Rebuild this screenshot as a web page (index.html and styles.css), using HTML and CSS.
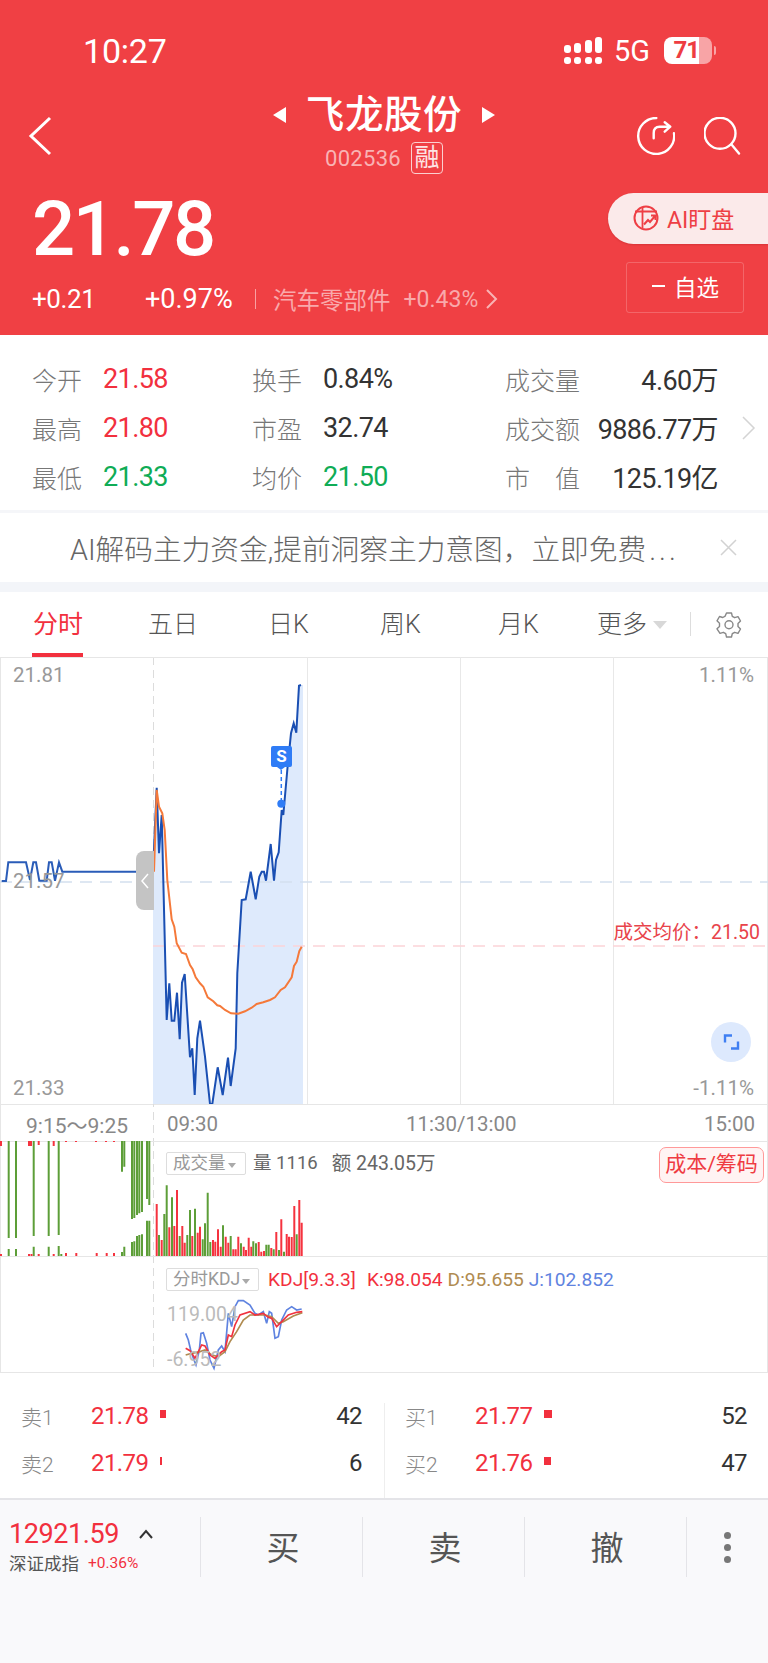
FILE: index.html
```html
<!DOCTYPE html>
<html lang="zh-CN">
<head>
  <meta charset="UTF-8">
  <meta name="viewport" content="width=device-width, initial-scale=1.0">
  <title>飞龙股份 002536</title>
  <link rel="stylesheet" href="styles.css">
</head>
<body>
<div class="page">

  <header class="header">
    <div class="status">
      <span class="time">10:27</span>
      <div class="status-right">
        <svg class="signal" width="39" height="27" viewBox="0 0 39 27">
          <g fill="#fff">
            <rect x="0" y="8" width="7" height="8" rx="3"/><rect x="0" y="20" width="7" height="7" rx="3"/>
            <rect x="10" y="6" width="7" height="10" rx="3"/><rect x="10" y="20" width="7" height="7" rx="3"/>
            <rect x="21" y="3" width="7" height="13" rx="3"/><rect x="21" y="20" width="7" height="7" rx="3"/>
            <rect x="31" y="0" width="7" height="16" rx="3"/><rect x="31" y="20" width="7" height="7" rx="3"/>
          </g>
        </svg>
        <span class="net">5G</span>
        <div class="battery"><span class="battery-level">71</span></div>
        <i class="battery-tip"></i>
      </div>
    </div>

    <div class="nav">
      <svg class="back" width="24" height="40" viewBox="0 0 24 40"><path d="M22 2 3 20l19 18" fill="none" stroke="#fff" stroke-width="3"/></svg>
      <div class="title-block">
        <div class="title-row">
          <i class="tri tri-left"></i>
          <h1 class="stock-name">飞龙股份</h1>
          <i class="tri tri-right"></i>
        </div>
        <div class="code-row"><span class="code">002536</span><span class="rong">融</span></div>
      </div>
      <div class="nav-icons">
        <svg width="38" height="38" viewBox="0 0 38 38" fill="none" stroke="#fff" stroke-width="2.400" stroke-linecap="round" stroke-linejoin="round">
          <path d="M19.300 1A18 18 0 1 0 37 16.300"/>
          <path d="M16.700 21.300V16c0-4 2-6.300 6-6.300h10M27.700 5.300l5.600 4.400-5.600 5"/>
        </svg>
        <svg width="38" height="38" viewBox="0 0 38 38" fill="none" stroke="#fff" stroke-width="2.400" stroke-linecap="round">
          <circle cx="16" cy="16.300" r="15.500"/><path d="m27.500 27.500 7.500 9"/>
        </svg>
      </div>
    </div>

    <div class="quote">
      <div class="quote-left">
        <div class="price">21.78</div>
        <div class="change-row">
          <span class="change">+0.21</span>
          <span class="change change-pct">+0.97%</span>
          <i class="change-sep"></i>
          <span class="sector">汽车零部件</span>
          <span class="sector-pct">+0.43%</span>
          <svg width="12" height="20" viewBox="0 0 12 20"><path d="m1 1 9 9-9 9" fill="none" stroke="#f9b3b4" stroke-width="2"/></svg>
        </div>
      </div>
      <div class="quote-right">
        <div class="ai-pill">
          <svg width="26" height="26" viewBox="0 0 26 26" fill="none" stroke="#ee3f45" stroke-width="2">
            <circle cx="13" cy="13" r="11.500"/>
            <path d="M2 6.500h22M9.500 2v21" stroke-width="1.800"/>
            <path d="m11 19.500 4-4.500 2 2 5-6M18 10.500h4.500V15" stroke-width="2"/>
          </svg>
          <span>AI盯盘</span>
        </div>
        <div class="watch-btn"><i class="watch-dash"></i><span>自选</span></div>
      </div>
    </div>
  </header>

  <section class="stats">
    <div class="stats-grid">
      <div class="stat stat-a"><span class="stat-label">今开</span><span class="up">21.58</span></div>
      <div class="stat stat-b"><span class="stat-label">换手</span><span class="flat">0.84%</span></div>
      <div class="stat stat-c"><span class="stat-label">成交量</span><span class="flat">4.60万</span></div>
      <div class="stat stat-a"><span class="stat-label">最高</span><span class="up">21.80</span></div>
      <div class="stat stat-b"><span class="stat-label">市盈</span><span class="flat">32.74</span></div>
      <div class="stat stat-c"><span class="stat-label">成交额</span><span class="flat">9886.77万</span></div>
      <div class="stat stat-a"><span class="stat-label">最低</span><span class="down">21.33</span></div>
      <div class="stat stat-b"><span class="stat-label">均价</span><span class="down">21.50</span></div>
      <div class="stat stat-c"><span class="stat-label">市　值</span><span class="flat">125.19亿</span></div>
    </div>
    <svg class="stats-more" width="14" height="24" viewBox="0 0 14 24"><path d="m1 1 11 11L1 23" fill="none" stroke="#d4d4d4" stroke-width="1.500"/></svg>
  </section>

  <div class="banner">
    <span class="banner-text">AI解码主力资金,提前洞察主力意图，立即免费<span class="banner-dots">...</span></span>
    <svg width="17" height="17" viewBox="0 0 17 17"><path d="m1 1 15 15M16 1 1 16" stroke="#d2d2d2" stroke-width="1.500"/></svg>
  </div>

  <nav class="tabs">
    <span class="tab tab-active">分时</span>
    <span class="tab">五日</span>
    <span class="tab">日K</span>
    <span class="tab">周K</span>
    <span class="tab">月K</span>
    <span class="tab">更多<i class="tab-caret"></i></span>
    <span class="tab tab-gear">
      <svg width="28" height="28" viewBox="0 0 28 28" fill="none" stroke="#888" stroke-width="1.400" stroke-linejoin="round">
        <path d="M11.500 2h5l.8 3.300 2.400 1.400 3.300-1 2.500 4.300-2.500 2.400v3.200l2.500 2.400-2.500 4.300-3.300-1-2.400 1.400-.8 3.300h-5l-.8-3.300-2.400-1.400-3.300 1L2 17.800l2.500-2.400v-3.200L2 9.800 4.500 5.500l3.300 1 2.400-1.400z"/>
        <circle cx="14" cy="13.800" r="4"/>
      </svg>
    </span>
  </nav>

  <section class="chart">
    <div class="panel panel-main">
      <svg class="panel-svg" width="768" height="447" viewBox="0 0 768 447" fill="none">
        <path fill="#deeafc" stroke="none" d="M153 214.700L156.700 130.700 159 196.300 161.700 158 163.300 223 166.700 363 169.300 326.300 171.700 363.700 174.300 363.700 177 335.700 179.700 382.300 182 325.700 184.700 317 190 400.300 192.300 391.300 194.700 438 197.300 381.300 200 363.700 205 399.700 210 447 212.300 447 217.700 410.300 222.700 438 228 400.700 230.700 429 235.700 391.300 237.300 316.300 241.700 243 245.700 242.300 250.700 214.700 255.700 242.300 259.300 219.700 261.700 214.700 264 214.700 266 223.700 270.700 187 274 223.700 276 203 278.700 195.300 281.700 153 283.300 158 287.300 113 291 76.300 293.700 66.300 296.300 75.700 299 28.700 301 28 303 28V447H153Z"/>
        <path stroke="#e8e8e8" d="M307.500 0V447M460.500 0V447M613.500 0V447"/>
        <path stroke="#d3dfee" stroke-width="1.500" stroke-dasharray="12 8" d="M0 225H768"/>
        <path stroke="#fbd3d7" stroke-width="1.500" stroke-dasharray="12 8" d="M153 289H768"/>
        <path stroke="#2a5cb8" stroke-width="2" d="M1.700 224H6L8.300 205.300H26L30 223 33.300 205.300H36L39.300 223.700H46.700L49 205.300H51.700L55 223.700 59 205.300 62.300 214.700H153"/>
        <path stroke="#1a4fb3" stroke-width="2" d="M153 214.700L156.700 130.700 159 196.300 161.700 158 163.300 223 166.700 363 169.300 326.300 171.700 363.700 174.300 363.700 177 335.700 179.700 382.300 182 325.700 184.700 317 190 400.300 192.300 391.300 194.700 438 197.300 381.300 200 363.700 205 399.700 210 447 212.300 447 217.700 410.300 222.700 438 228 400.700 230.700 429 235.700 391.300 237.300 316.300 241.700 243 245.700 242.300 250.700 214.700 255.700 242.300 259.300 219.700 261.700 214.700 264 214.700 266 223.700 270.700 187 274 223.700 276 203 278.700 195.300 281.700 153 283.300 158 287.300 113 291 76.300 293.700 66.300 296.300 75.700 299 28.700 301 28"/>
        <path stroke="#f5793a" stroke-width="2" d="M154 214.700L156.700 133 159 149.700 162.300 156.300 164.700 173 167.300 223 171.700 262.300 174.300 269.700 176.700 286.300 181.700 295.700 186 297 190 308 192.700 312.300 195.700 320.300 200 326.300 203.300 329.700 207.700 340.300 213.300 344.300 217.300 348.300 220 349 225 353 231 356.300 238.300 356.700 245 354.300 251.700 350.700 256.700 347 263.300 345.300 270 343 275 340.300 280.700 333 285 330.300 291.700 320.300 294 309 296.700 304.700 299.300 294 301.700 289.700"/>
        <path stroke="#2f7cf6" stroke-width="1.500" stroke-dasharray="4 3" d="M281.300 113V143"/>
        <circle cx="281.300" cy="146.700" r="4" fill="#2f7cf6"/>
        <circle cx="731" cy="385" r="20" fill="#dde9fd"/>
        <path stroke="#3f7ff2" stroke-width="2.400" d="M725 385.500V378.500H732M738 384.500V391.500H731"/>
      </svg>
      <span class="axis-label label-top-left">21.81</span>
      <span class="axis-label label-mid-left">21.57</span>
      <span class="axis-label label-bottom-left">21.33</span>
      <span class="axis-label label-top-right">1.11%</span>
      <span class="axis-label label-bottom-right">-1.11%</span>
      <span class="avg-label">成交均价：21.50</span>
      <div class="collapse-handle">
        <svg width="8" height="16" viewBox="0 0 8 16"><path d="M7 1 1 8l6 7" fill="none" stroke="#fff" stroke-width="1.500"/></svg>
      </div>
      <div class="sell-flag">S</div>
    </div>

    <div class="time-axis">
      <span class="time-pre">9:15～9:25</span>
      <span class="time-open">09:30</span>
      <span class="time-mid">11:30/13:00</span>
      <span class="time-close">15:00</span>
    </div>

    <div class="panel panel-volume">
      <svg class="panel-svg" width="768" height="115" viewBox="0 0 768 115" fill="none">
        <path stroke="#f5333f" stroke-width="2" d="M156.700 115V63M161.700 115V99M169.300 115V86.300M174.300 115V85M177 115V49M182.300 115V85M184.700 115V101.700M192.300 115V95M197.700 115V91.700M200 115V85.700M213 115V99M215.300 115V100.700M218 115V88.300M220.700 115V105.700M225.700 115V95.700M228.300 115V101.700M233.300 115V108.300M235.700 115V108.300M238.300 115V95.700M243.700 115V105.700M246 115V109M248.700 115V96.700M251.300 115V105.700M258.700 115V101M261.300 115V110.700M264 115V110M271.300 115V107M276.300 115V91M281.300 115V78.300M286.700 115V93M289 115V95.700M291.700 115V96M294.300 115V65M299.300 115V59M301.700 115V81.700"/>
        <path stroke="#5d9e38" stroke-width="2" d="M159 115V94M164.300 115V73M166.700 115V44.300M172 115V56.300M179.700 115V95M187.300 115V94M190 115V69M195 115V67.700M202.700 115V98.300M205 115V82.300M207.700 115V51.700M210.300 115V101M223 115V84.300M230.700 115V95M241 115V102.300M253.300 115V100.300M256 115V102.300M266.300 115V103.700M268.700 115V103.700M273.700 115V108.300M279 115V109M284 115V110.700M296.700 115V93.300"/>
        <path stroke="#5d9e38" stroke-width="2" d="M8.700 0V97M16 0V97M33.700 0V95M48.700 0V95M58.700 0V94M122 0V30.700M124.300 0V25.700M132 0V78M134.300 0V77M137 0V74M139.300 0V72.300M142 0V71M147 0V58M149.300 0V64"/>
        <path stroke="#5d9e38" stroke-width="2" d="M8.700 115V108M16 115V108M33.700 115V105.700M48.700 115V105.700M58.700 115V105M61.300 115V113M122 115V111M124.300 115V105.700M132 115V101M134.300 115V100.300M137 115V95M139.300 115V94M142 115V93.300M147 115V79.700M149.300 115V79.700"/>
        <path stroke="#f5333f" stroke-width="2" d="M1 0V5M29 0V5M31 0V5M38.700 0V4M53.700 0V5M66 0V1M76 0V1M96 0V1M106 0V1M114 0V1M1 115V113M29 115V113M31.500 115V113M38.700 115V113M53.700 115V113M66 115V112M76.300 115V112M96.700 115V112M106.700 115V112M114 115V112"/>
      </svg>
      <div class="indicator-row">
        <span class="dropdown dropdown-vol">成交量<i class="dropdown-caret"></i></span>
        <span class="vol-info">量 1116</span>
        <span class="vol-info vol-amount">额 243.05万</span>
      </div>
      <div class="cost-btn">成本/筹码</div>
    </div>

    <div class="panel panel-kdj">
      <svg class="panel-svg" width="768" height="116" viewBox="0 0 768 116" fill="none">
        <g transform="translate(140 4) scale(.3333)" stroke-width="5">
          <path stroke="#5f83e0" d="M137 220L145 240 152 270 160 295 168 315 178 270 183 220 190 218 200 250 210 300 222 325 235 270 245 258 255 275 265 160 275 200 285 140 295 122 310 122 330 135 345 160 355 165 370 155 380 190 388 155 395 160 405 235 415 230 425 180 440 150 455 140 470 150 485 147"/>
          <path stroke="#b08b50" d="M137 285L155 280 180 275 195 270 215 285 235 290 255 275 270 245 290 215 310 180 330 165 350 165 375 165 395 170 415 190 430 185 460 168 487 158"/>
          <path stroke="#f0333f" d="M137 265L150 272 165 295 185 255 195 258 210 285 225 295 245 275 255 270 265 225 275 230 285 195 300 165 330 155 345 165 370 160 385 172 395 175 410 200 425 185 445 165 470 157 487 155"/>
        </g>
      </svg>
      <div class="indicator-row indicator-kdj">
        <span class="dropdown dropdown-kdj">分时KDJ<i class="dropdown-caret"></i></span>
        <span class="kdj-val kdj-name">KDJ[9.3.3]</span>
        <span class="kdj-val kdj-k">K:98.054</span>
        <span class="kdj-val kdj-d">D:95.655</span>
        <span class="kdj-val kdj-j">J:102.852</span>
      </div>
      <span class="kdj-scale kdj-scale-top">119.004</span>
      <span class="kdj-scale kdj-scale-bottom">-6.952</span>
    </div>
  </section>

  <section class="book">
    <div class="book-side book-sell">
      <div class="book-row"><span class="book-label">卖1</span><span class="book-price">21.78</span><i class="book-bar bar-w6"></i><span class="book-qty">42</span></div>
      <div class="book-row"><span class="book-label">卖2</span><span class="book-price">21.79</span><i class="book-bar bar-w2"></i><span class="book-qty">6</span></div>
    </div>
    <i class="book-divider"></i>
    <div class="book-side book-buy">
      <div class="book-row"><span class="book-label">买1</span><span class="book-price">21.77</span><i class="book-bar bar-w8"></i><span class="book-qty">52</span></div>
      <div class="book-row"><span class="book-label">买2</span><span class="book-price">21.76</span><i class="book-bar bar-w7"></i><span class="book-qty">47</span></div>
    </div>
  </section>

  <footer class="footer">
    <div class="index-block">
      <div class="index-top">
        <span class="index-value">12921.59</span>
        <svg width="14" height="10" viewBox="0 0 14 10"><path d="m1 9 6-7 6 7" fill="none" stroke="#333" stroke-width="2"/></svg>
      </div>
      <div class="index-bottom"><span class="index-name">深证成指</span><span class="index-pct">+0.36%</span></div>
    </div>
    <span class="action">买</span>
    <span class="action">卖</span>
    <span class="action">撤</span>
    <span class="action action-more"><i></i><i></i><i></i></span>
  </footer>

</div>
</body>
</html>
```

FILE: styles.css
```css
* {
  margin: 0;
  padding: 0;
  box-sizing: border-box;
}
body {
  background: #fff;
  font-family: Roboto, "Noto Sans CJK SC", sans-serif;
  color: #333;
}
i {
  font-style: normal;
}
.page {
  width: 768px;
  height: 1663px;
  overflow: hidden;
}

/* Red header */
.header {
  height: 335px;
  background: #f04044;
  color: #fff;
  padding-top: 37px;
}
.status {
  display: flex;
  justify-content: space-between;
  align-items: center;
  height: 27px;
  padding: 0 52px 0 83px;
}
.time {
  font-size: 34px;
  letter-spacing: -.2px;
}
.status-right {
  display: flex;
  align-items: center;
}
.net {
  font-size: 29px;
  margin: 0 14px 0 11px;
}
.battery {
  width: 48px;
  height: 27px;
  border-radius: 8px;
  background: linear-gradient(90deg, #fff 73%, #f8a4a6 73%);
}
.battery-level {
  display: block;
  width: 35px;
  text-align: right;
  font-size: 24px;
  line-height: 27px;
  font-weight: 700;
  letter-spacing: -1px;
  color: #ee3d42;
}
.battery-tip {
  width: 2px;
  height: 9px;
  margin-left: 2px;
  border-radius: 0 2px 2px 0;
  background: #f8a4a6;
}

.nav {
  display: grid;
  grid-template-columns: 1fr auto 1fr;
  margin-top: 33px;
  height: 77px;
  padding: 0 26px 0 28px;
}
.back {
  margin-top: 19px;
}
.title-block {
  display: flex;
  flex-direction: column;
  align-items: center;
  margin-left: -2px;
}
.title-row {
  display: flex;
  align-items: center;
  height: 35px;
}
.stock-name {
  font-size: 38.500px;
  font-weight: 500;
  line-height: 35px;
  letter-spacing: .6px;
  margin: 0 20px;
}
.tri {
  width: 0;
  height: 0;
  border-top: 8px solid transparent;
  border-bottom: 8px solid transparent;
}
.tri-left {
  border-right: 13px solid #fff;
}
.tri-right {
  border-left: 13px solid #fff;
}
.code-row {
  display: flex;
  align-items: center;
  margin-top: 10px;
  height: 32px;
  color: #f9b3b4;
}
.code {
  font-size: 22px;
  letter-spacing: .3px;
}
.rong {
  width: 32px;
  height: 32px;
  margin-left: 10px;
  border: 1px solid #fbd0d0;
  border-radius: 4px;
  color: #fde4e4;
  font-size: 25px;
  line-height: 29px;
  text-align: center;
}
.nav-icons {
  display: flex;
  justify-content: flex-end;
  gap: 29px;
  margin-top: 20px;
}

.quote {
  display: flex;
  justify-content: space-between;
  margin-top: 19px;
  height: 120px;
  padding-left: 32px;
}
.price {
  font-size: 76px;
  font-weight: 500;
  line-height: 62px;
  letter-spacing: -2.400px;
  margin-top: 5px;
}
.change-row {
  display: flex;
  align-items: center;
  height: 24px;
  margin-top: 27px;
  font-size: 26px;
}
.change {
  width: 113px;
  letter-spacing: -.4px;
}
.change-pct {
  width: 110px;
  font-size: 27px;
  letter-spacing: 0;
}
.change-sep {
  width: 1px;
  height: 20px;
  background: #f9a0a2;
  margin-right: 17px;
}
.sector {
  font-size: 23.500px;
  color: #f9a9ab;
}
.sector-pct {
  font-size: 23px;
  color: #f9a9ab;
  margin: 0 8px 0 13px;
}
.quote-right {
  display: flex;
  flex-direction: column;
  align-items: flex-end;
}
.ai-pill {
  display: flex;
  align-items: center;
  gap: 8px;
  width: 160px;
  height: 51px;
  padding: 0 0 2px 25px;
  border-radius: 26px 0 0 26px;
  background: #fbeaea;
  box-shadow: 0 1px 2px rgba(120, 0, 0, .2);
  color: #ee3f45;
  font-size: 23px;
}
.watch-btn {
  display: flex;
  align-items: center;
  width: 118px;
  height: 51px;
  margin: 18px 24px 0 0;
  padding: 0 0 4px 25px;
  border: 1px solid rgba(255, 255, 255, .2);
  border-radius: 3px;
  font-size: 22.500px;
}
.watch-dash {
  width: 13px;
  height: 2px;
  background: #fff;
  margin-right: 9px;
}

/* Stats */
.stats {
  display: flex;
  align-items: center;
  height: 175px;
  padding: 19px 0 9px 32px;
}
.stats-grid {
  display: grid;
  grid-template-columns: 220px 253px 213px;
  grid-auto-rows: 49px;
}
.stat {
  display: flex;
  align-items: center;
  font-size: 27px;
  letter-spacing: -.6px;
}
.stat-label {
  font-size: 25px;
  color: #777;
  width: 71px;
  font-weight: 300;
  letter-spacing: 0;
}
.stat-c {
  justify-content: space-between;
}
.stat-c .stat-label {
  width: auto;
}
.up {
  color: #f2303e;
}
.down {
  color: #0fac56;
}
.flat {
  color: #333;
}
.stats-more {
  margin-left: 24px;
}

.banner {
  display: flex;
  align-items: center;
  height: 82px;
  padding-left: 70px;
  border-top: 3px solid #f5f6f9;
  border-bottom: 10px solid #f3f5f9;
}
.banner-text {
  width: 650px;
  font-size: 28.700px;
  color: #666;
  font-weight: 300;
  white-space: nowrap;
}
.banner-dots {
  letter-spacing: 3px;
  margin-left: 3px;
}
.tabs {
  display: grid;
  grid-template-columns: 33px 115px 120px 112px 118px 99px 93px 1fr;
  height: 65px;
  align-items: center;
  font-size: 25px;
  color: #555;
}
.tab {
  position: relative;
  display: flex;
  align-items: center;
  height: 100%;
  padding-bottom: 5px;
  font-weight: 300;
}
.tab:first-child {
  grid-column: 2;
}
.tab-active {
  color: #f2303e;
  font-weight: 400;
}
.tab-active::after {
  content: "";
  position: absolute;
  left: -1px;
  bottom: 0;
  width: 51px;
  height: 4px;
  background: #f2303e;
}
.tab-caret {
  width: 0;
  height: 0;
  margin: 5px 0 0 6px;
  border-left: 7px solid transparent;
  border-right: 7px solid transparent;
  border-top: 8px solid #d8d8d8;
}
.tab-gear {
  padding: 0 0 0 25px;
}
.tab-gear::before {
  content: "";
  position: absolute;
  left: 0;
  top: 20px;
  width: 1px;
  height: 24px;
  background: #ddd;
}

/* Chart */
.chart {
  position: relative;
  height: 716px;
  box-shadow: inset 1px 0 #e6e6e6, inset -1px 0 #e6e6e6;
  border-bottom: 1px solid #e6e6e6;
}
.chart::before {
  content: "";
  position: absolute;
  left: 153px;
  top: 0;
  bottom: 0;
  width: 1px;
  background: repeating-linear-gradient(#dcdcdc 0 8px, transparent 8px 13px);
}
.panel {
  position: relative;
  border-top: 1px solid #e6e6e6;
}
.panel-svg {
  position: absolute;
  left: 0;
  top: -1px;
}
.panel-main {
  height: 447px;
}
.axis-label {
  position: absolute;
  font-size: 20.500px;
  line-height: 24px;
  color: #999;
}
.label-top-left {
  left: 13px;
  top: 5px;
}
.label-mid-left {
  left: 13px;
  top: 211px;
}
.label-bottom-left {
  left: 13px;
  top: 418px;
}
.label-top-right {
  right: 14px;
  top: 5px;
}
.label-bottom-right {
  right: 14px;
  top: 418px;
}
.avg-label {
  position: absolute;
  right: 8px;
  top: 264px;
  font-size: 19.500px;
  line-height: 22px;
  color: #e8434a;
}
.collapse-handle {
  position: absolute;
  left: 136px;
  top: 193px;
  display: flex;
  align-items: center;
  justify-content: center;
  width: 18px;
  height: 59px;
  border-radius: 8px 0 0 8px;
  background: #c4c4c4;
}
.sell-flag {
  position: absolute;
  left: 271px;
  top: 88px;
  width: 21px;
  height: 21px;
  border-radius: 2px;
  background: #2f7cf6;
  color: #fff;
  font-size: 17px;
  font-weight: 700;
  line-height: 21px;
  text-align: center;
}
.sell-flag::after {
  content: "";
  position: absolute;
  left: 6px;
  top: 21px;
  border-left: 4px solid transparent;
  border-right: 4px solid transparent;
  border-top: 3px solid #2f7cf6;
}

.time-axis {
  display: flex;
  align-items: center;
  height: 37px;
  padding-top: 1px;
  border-top: 1px solid #e6e6e6;
  font-size: 20.500px;
  color: #888;
}
.time-pre {
  width: 140px;
  padding-left: 26px;
  font-size: 21px;
  white-space: nowrap;
}
.time-open {
  margin-left: 27px;
  width: 239px;
}
.time-mid {
  width: 298px;
}
.time-close {
  width: 50px;
}

.panel-volume {
  height: 115px;
}
.indicator-row {
  position: absolute;
  left: 166px;
  top: 10px;
  display: flex;
  align-items: center;
  height: 23px;
  line-height: 23px;
}
.indicator-kdj {
  top: 11px;
}
.dropdown {
  display: flex;
  align-items: center;
  height: 23px;
  border: 1px solid #ddd;
  border-radius: 2px;
  background: #fff;
  padding-left: 6px;
  font-size: 17.500px;
  color: #999;
  white-space: nowrap;
}
.dropdown-vol {
  width: 80px;
}
.dropdown-kdj {
  width: 93px;
}
.dropdown-caret {
  width: 0;
  height: 0;
  margin: 3px 0 0 2px;
  border-left: 4px solid transparent;
  border-right: 4px solid transparent;
  border-top: 5px solid #aaa;
}
.vol-info {
  margin-left: 7px;
  font-size: 18.500px;
  color: #666;
  white-space: nowrap;
}
.vol-amount {
  margin-left: 14px;
  font-size: 19.500px;
}
.cost-btn {
  position: absolute;
  right: 4px;
  top: 5px;
  width: 105px;
  height: 36px;
  border: 1.500px solid #f99;
  border-radius: 7px;
  background: #fff3f3;
  color: #ef3b42;
  font-size: 21px;
  line-height: 33px;
  text-align: center;
}

.panel-kdj {
  height: 115px;
}
.kdj-val {
  font-size: 19.200px;
  color: #f2303e;
  white-space: nowrap;
}
.kdj-name {
  margin-left: 9px;
}
.kdj-k {
  margin-left: 11px;
}
.kdj-d {
  margin-left: 5px;
  color: #b08b50;
}
.kdj-j {
  margin-left: 5px;
  color: #5f83e0;
}
.kdj-scale {
  position: absolute;
  left: 167px;
  font-size: 19.500px;
  line-height: 20px;
  color: #bbb;
}
.kdj-scale-top {
  top: 48px;
}
.kdj-scale-bottom {
  top: 93px;
}

/* Order book */
.book {
  display: flex;
  height: 125px;
}
.book-side {
  padding-top: 19px;
}
.book-sell {
  width: 384px;
  padding-left: 21px;
  padding-right: 22px;
}
.book-buy {
  flex: 1;
  padding-left: 20px;
  padding-right: 21px;
}
.book-divider {
  align-self: flex-end;
  width: 1px;
  height: 95px;
  background: #eee;
}
.book-row {
  display: flex;
  align-items: center;
  height: 47px;
}
.book-label {
  width: 70px;
  font-size: 21px;
  color: #888;
  font-weight: 300;
}
.book-price {
  width: 69px;
  font-size: 24px;
  letter-spacing: -.6px;
  color: #f2303e;
}
.book-bar {
  height: 8px;
  margin-bottom: 3px;
  background: #f2303e;
}
.bar-w6 {
  width: 6px;
}
.bar-w2 {
  width: 2px;
}
.bar-w8 {
  width: 8px;
}
.bar-w7 {
  width: 7px;
}
.book-qty {
  margin-left: auto;
  font-size: 24px;
  letter-spacing: -.6px;
  color: #333;
}

/* Bottom bar */
.footer {
  display: flex;
  height: 165px;
  padding-top: 17px;
  align-items: flex-start;
  border-top: 2px solid #e4e4e8;
  background: #f9f9fb;
}
.index-block {
  width: 200px;
  height: 60px;
  padding-left: 9px;
}
.index-top {
  display: flex;
  align-items: center;
  gap: 20px;
  height: 30px;
  margin-top: 2px;
}
.index-value {
  font-size: 27px;
  letter-spacing: -.4px;
  color: #f2303e;
}
.index-bottom {
  display: flex;
  align-items: center;
  gap: 9px;
  margin-top: 1px;
}
.index-name {
  font-size: 17.500px;
  color: #555;
}
.index-pct {
  font-size: 15.500px;
  color: #f2303e;
}
.action {
  display: flex;
  align-items: center;
  justify-content: center;
  width: 162px;
  height: 60px;
  padding: 0 0 3px 3px;
  border-left: 1px solid #e4e4e8;
  font-size: 33px;
  color: #555;
}
.action-more {
  flex-direction: column;
  gap: 5px;
  width: 81px;
  padding: 0;
}
.action-more i {
  width: 7px;
  height: 7px;
  border-radius: 50%;
  background: #777;
}
```
